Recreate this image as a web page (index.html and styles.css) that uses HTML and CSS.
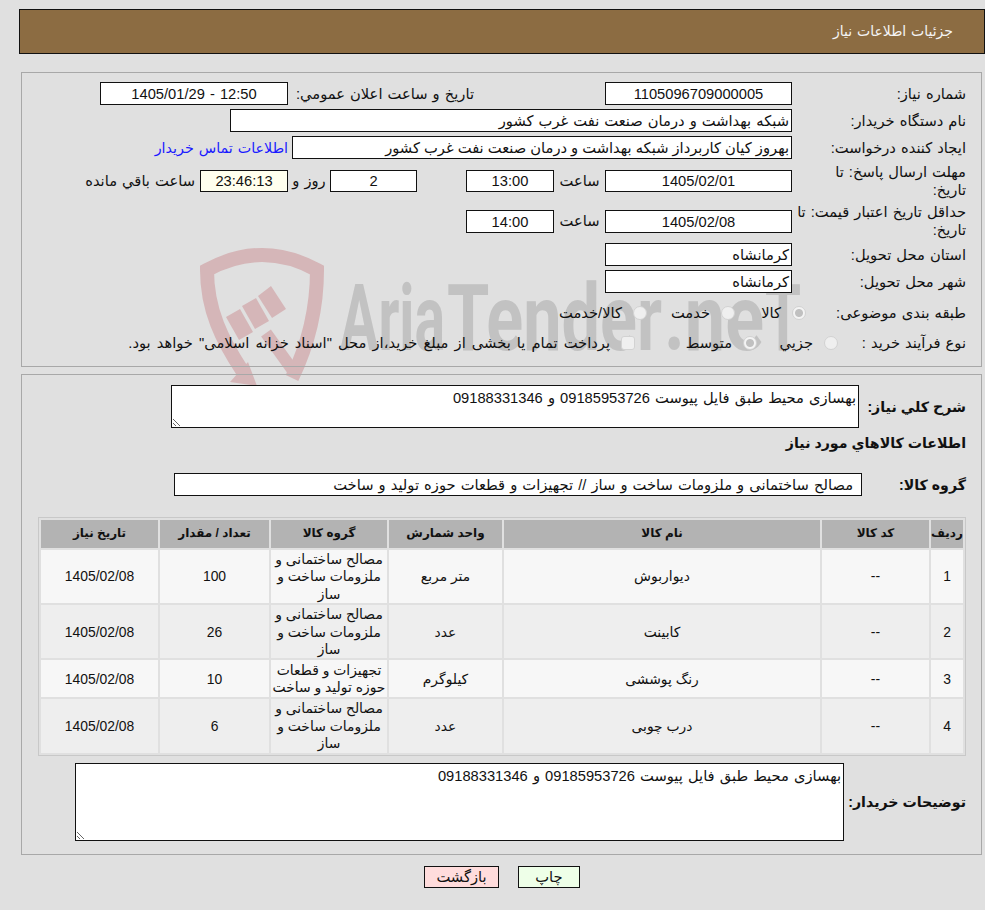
FILE: index.html
```html
<!DOCTYPE html>
<html lang="fa" dir="rtl">
<head>
<meta charset="utf-8">
<title>جزئیات اطلاعات نیاز</title>
<link rel="stylesheet" href="styles.css">
</head>
<body>
<svg class="watermark" viewBox="190 240 620 150" aria-hidden="true">
  <g class="wm-red">
    <path class="wm-shield" d="M243 372 C222 340 207 310 207 270 Q262 240 317 270 C317 310 308 345 292 378"/>
    <path class="wm-handle" d="M266 333 L294 372"/>
    <polygon points="230,382 248,362 257,386"/>
    <polygon points="226,317 240,309 253,332 239,340"/>
    <polygon points="242,306 256,298 269,321 255,329"/>
    <polygon points="258,296 271,286 286,309 272,318"/>
  </g>
  <text class="wm-text" x="340" y="350" textLength="105" lengthAdjust="spacingAndGlyphs">Aria</text>
  <text class="wm-text" x="447" y="350" textLength="215" lengthAdjust="spacingAndGlyphs">Tender</text>
  <text class="wm-text" x="664" y="350" textLength="100" lengthAdjust="spacingAndGlyphs">.ne</text>
  <text class="wm-text" x="765" y="350" textLength="36" lengthAdjust="spacingAndGlyphs">T</text>
</svg>

<header class="title-bar">جزئیات اطلاعات نیاز</header>

<section class="panel panel-info">
  <div class="row">
    <div class="label">شماره نیاز:</div>
    <div class="box box-num">1105096709000005</div>
    <div class="announce-label">تاریخ و ساعت اعلان عمومي:</div>
    <div class="box box-num box-announce">12:50 - 1405/01/29</div>
  </div>
  <div class="row">
    <div class="label">نام دستگاه خریدار:</div>
    <div class="box box-buyer">شبکه بهداشت و درمان صنعت نفت غرب کشور</div>
  </div>
  <div class="row">
    <div class="label">ایجاد کننده درخواست:</div>
    <div class="box box-creator">بهروز کیان کاربرداز شبکه بهداشت و درمان صنعت نفت غرب کشور</div>
    <a class="contact" href="#">اطلاعات تماس خریدار</a>
  </div>
  <div class="row row-tall">
    <div class="label label-wrap">مهلت ارسال پاسخ: تا تاریخ:</div>
    <div class="box box-num box-short">1405/02/01</div>
    <div class="hour">ساعت</div>
    <div class="box box-num box-time box-short">13:00</div>
    <div class="spacer"></div>
    <div class="box box-num box-days box-short">2</div>
    <div class="days">روز و</div>
    <div class="box box-num box-time box-short box-timer">23:46:13</div>
    <div class="remain">ساعت باقي مانده</div>
  </div>
  <div class="row row-tall">
    <div class="label">حداقل تاریخ اعتبار قیمت: تا تاریخ:</div>
    <div class="box box-num">1405/02/08</div>
    <div class="hour">ساعت</div>
    <div class="box box-num box-time">14:00</div>
  </div>
  <div class="row">
    <div class="label">استان محل تحویل:</div>
    <div class="box box-place">کرمانشاه</div>
  </div>
  <div class="row">
    <div class="label">شهر محل تحویل:</div>
    <div class="box box-place">کرمانشاه</div>
  </div>
  <div class="row row-radio row-first-radio">
    <div class="label label-kind">طبقه بندی موضوعی:</div>
    <div class="option opt-71"><input class="radio" type="radio" name="kind" disabled checked><span>کالا</span></div>
    <div class="option opt-88"><input class="radio" type="radio" name="kind" disabled><span>خدمت</span></div>
    <div class="option"><input class="radio" type="radio" name="kind" disabled><span>کالا/خدمت</span></div>
  </div>
  <div class="row row-radio">
    <div class="label label-process">نوع فرآیند خرید :</div>
    <div class="option opt-81"><input class="radio" type="radio" name="process" disabled><span>جزیي</span></div>
    <div class="option opt-122"><input class="radio" type="radio" name="process" disabled checked><span>متوسط</span></div>
    <div class="option option-wide"><input class="check" type="checkbox" disabled><span>پرداخت تمام یا بخشی از مبلغ خرید،از محل "اسناد خزانه اسلامی" خواهد بود.</span></div>
  </div>
</section>

<section class="panel panel-items">
  <div class="row row-summary">
    <div class="label-bold">شرح کلي نیاز:</div>
    <textarea class="note note-summary" readonly>بهسازی محیط طبق فایل پیوست 09185953726 و 09188331346</textarea>
  </div>
  <h2 class="section-title">اطلاعات کالاهاي مورد نیاز</h2>
  <div class="row row-group">
    <div class="label-bold label-group">گروه کالا:</div>
    <div class="box box-group">مصالح ساختمانی و ملزومات ساخت و ساز // تجهیزات و قطعات حوزه تولید و ساخت</div>
  </div>
  <table class="items">
    <colgroup>
      <col class="c-idx"><col class="c-code"><col class="c-name"><col class="c-unit"><col class="c-grp"><col class="c-qty"><col class="c-date">
    </colgroup>
    <thead>
      <tr><th>ردیف</th><th>کد کالا</th><th>نام کالا</th><th>واحد شمارش</th><th>گروه کالا</th><th>تعداد / مقدار</th><th>تاریخ نیاز</th></tr>
    </thead>
    <tbody>
      <tr><td>1</td><td>--</td><td>دیواربوش</td><td>متر مربع</td><td>مصالح ساختمانی و ملزومات ساخت و ساز</td><td>100</td><td>1405/02/08</td></tr>
      <tr><td>2</td><td>--</td><td>کابینت</td><td>عدد</td><td>مصالح ساختمانی و ملزومات ساخت و ساز</td><td>26</td><td>1405/02/08</td></tr>
      <tr><td>3</td><td>--</td><td>رنگ پوششی</td><td>کیلوگرم</td><td>تجهیزات و قطعات حوزه تولید و ساخت</td><td>10</td><td>1405/02/08</td></tr>
      <tr><td>4</td><td>--</td><td>درب چوبی</td><td>عدد</td><td>مصالح ساختمانی و ملزومات ساخت و ساز</td><td>6</td><td>1405/02/08</td></tr>
    </tbody>
  </table>
  <div class="row row-buyer-note">
    <div class="label-bold label-note">توضیحات خریدار:</div>
    <textarea class="note note-buyer" readonly>بهسازی محیط طبق فایل پیوست 09185953726 و 09188331346</textarea>
  </div>
</section>

<div class="actions">
  <button class="btn btn-print" type="button">چاپ</button>
  <button class="btn btn-back" type="button">بازگشت</button>
</div>
</body>
</html>
```

FILE: styles.css
```css
* { box-sizing: border-box; }
html, body { margin: 0; padding: 0; height: 910px; overflow: hidden; }
body {
  position: relative;
  background: #e0e0e0;
  color: #111;
  font-family: "Liberation Sans", "DejaVu Sans", sans-serif;
  font-size: 14.7px;
  line-height: 18px;
  word-spacing: 1px;
}
.watermark {
  position: absolute;
  left: 190px;
  top: 240px;
  width: 620px;
  height: 150px;
}
.wm-red { fill: #d5b6b8; }
.wm-shield { fill: none; stroke: #d5b6b8; stroke-width: 14; }
.wm-handle { fill: none; stroke: #d5b6b8; stroke-width: 12; }
.wm-text {
  fill: #c2c2c2;
  font-family: "Roboto", sans-serif;
  font-weight: 700;
  font-size: 92px;
  direction: ltr;
  unicode-bidi: bidi-override;
}
.title-bar {
  position: relative;
  height: 45px;
  width: 966px;
  margin-top: 9px;
  padding: 0 31px 0 0;
  background: #8c6c42;
  border: 1px solid #111;
  color: #f4f4f4;
  font-size: 14px;
  line-height: 43px;
}
.panel {
  position: relative;
  width: 961px;
  margin-right: 3px;
  border: 1px solid #a8a8a8;
}
.panel-info {
  margin-top: 18px;
  height: 295px;
  padding: 9px 15px 0 0;
  display: flex;
  flex-direction: column;
  gap: 4px;
}
.panel-items {
  margin-top: 7px;
  height: 481px;
  padding: 10px 15px 0 0;
}
.row { display: flex; align-items: center; min-height: 23px; }
.row-tall { height: 36px; align-items: center; }
.label { width: 170px; margin-left: 4px; flex: none; }
.label-wrap { padding-left: 8px; }
.box {
  flex: none;
  height: 23px;
  background: #fff;
  border: 1px solid #111;
  padding: 0 2px;
  line-height: 22px;
  white-space: nowrap;
  overflow: hidden;
}
.box-num { width: 187px; text-align: center; }
.box-announce { width: 188px; }
.box-time { width: 88px; }
.box-days { width: 87px; }
.box-short { height: 22px; line-height: 21px; }
.box-buyer { width: 562px; }
.box-creator { width: 500px; word-spacing: 0; }
.box-place { width: 187px; }
.box-timer { background: #ffffee; }
.announce-label { width: 317px; padding-right: 131px; white-space: nowrap; flex: none; }
.contact { margin-right: 4px; color: #1a1aff; text-decoration: none; white-space: nowrap; font-size: 14.3px; }
.hour { width: 51px; text-align: center; flex: none; }
.spacer { width: 49px; flex: none; }
.days { width: 42px; text-align: center; flex: none; }
.remain { margin-right: 5px; white-space: nowrap; }
.row-first-radio { margin-top: 3px; }
.row-radio { height: 26px; }
.label-kind { width: 160px; margin-left: 0; }
.label-process { width: 128px; margin-left: 0; }
.option { display: flex; align-items: center; flex: none; white-space: nowrap; }
.option-wide { word-spacing: 2px; }
.opt-71 { width: 71px; }
.opt-81 { width: 81px; }
.opt-88 { width: 88px; }
.opt-122 { width: 122px; }
.radio, .check {
  appearance: none;
  flex: none;
  width: 14px;
  height: 14px;
  margin: 0 0 0 11px;
  background: #efefef;
  border: 1px solid #d2d2d2;
}
.radio { border-radius: 50%; }
.check { border-radius: 3px; }
.radio:checked { background: radial-gradient(circle, #c0c0c0 0 3.5px, #f4f4f4 4.5px); }
.label-bold { font-size: 14.2px; font-weight: 700; white-space: nowrap; flex: none; word-spacing: 0; }
.row-summary { height: 43px; }
.row-summary .label-bold { width: 107px; }
.note {
  display: block;
  flex: none;
  background: #fff;
  border: 1px solid #111;
  border-radius: 0;
  color: #111;
  font: inherit;
  word-spacing: 1px;
  padding: 3px 2px 0;
  margin: 0;
  outline: none;
}
.note-summary { width: 688px; height: 43px; }
.section-title {
  margin: 6px 0 0;
  height: 18px;
  font-size: 14.2px;
  line-height: 18px;
  font-weight: 700;
  word-spacing: 0;
}
.row-group { margin-top: 21px; }
.label-group { width: 104px; }
.box-group { width: 688px; padding: 0 8px; }
.items {
  margin-top: 21px;
  width: 928px;
  table-layout: fixed;
  border: 1px solid #c8c8c8;
  border-collapse: separate;
  border-spacing: 2px;
  font-size: 13.9px;
  line-height: 17.4px;
  text-align: center;
  word-spacing: 0;
}
.c-idx { width: 32px; }
.c-code { width: 107px; }
.c-name { width: 316px; }
.c-unit { width: 113px; }
.c-grp { width: 116px; }
.c-qty { width: 109px; }
.c-date { width: 117px; }
.items th {
  height: 28px;
  padding: 0;
  background: #b3b3b3;
  font-size: 12px;
  font-weight: 700;
}
.items td { padding: 1px 0 0; height: 37px; }
.items tbody tr:nth-child(odd) td { background: #f7f7f7; }
.items tbody tr:nth-child(even) td { background: #eeeeee; }
.row-buyer-note { margin-top: 7px; height: 78px; }
.label-note { width: 122px; }
.note-buyer { width: 769px; height: 78px; }
.actions {
  position: relative;
  display: flex;
  justify-content: center;
  gap: 19px;
  margin-top: 11px;
  padding-left: 19px;
}
.btn {
  height: 22px;
  padding: 0;
  border: 1px solid #111;
  border-radius: 0;
  color: #111;
  font: inherit;
  line-height: 18px;
}
.btn-print { width: 62px; background: #eeffe8; }
.btn-back { width: 75px; background: #ffdcdc; }
```
